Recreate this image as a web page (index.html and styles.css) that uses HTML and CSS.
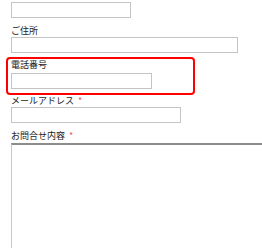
FILE: index.html
```html
<!DOCTYPE html>
<html lang="ja">
<head>
<meta charset="utf-8">
<link rel="stylesheet" href="styles.css">
</head>
<body>
<form class="form">
  <div class="row row-first">
    <input class="field field-name" type="text">
  </div>
  <div class="row">
    <label class="label">ご住所</label>
    <input class="field field-address" type="text">
  </div>
  <div class="highlight">
    <label class="label">電話番号</label>
    <input class="field field-tel" type="text">
  </div>
  <div class="row">
    <label class="label">メールアドレス <span class="req">*</span></label>
    <input class="field field-mail" type="text">
  </div>
  <div class="row">
    <label class="label label-msg">お問合せ内容 <span class="req">*</span></label>
    <textarea class="area"></textarea>
  </div>
</form>
</body>
</html>
```

FILE: styles.css
```css
html, body {
  margin: 0;
  padding: 0;
  background: #fff;
  overflow: hidden;
}
.form {
  width: 262px;
  height: 248px;
  padding: 2px 0 0 6px;
  box-sizing: border-box;
  font-family: "Noto Sans CJK JP", "Noto Sans", sans-serif;
  font-size: 9px;
  color: #222;
  overflow: hidden;
}
.row {
  display: flex;
  flex-direction: column;
  align-items: flex-start;
  padding-left: 5px;
}
.row-first {
  margin-bottom: 7px;
}
.label {
  display: block;
  line-height: 12px;
  height: 12px;
  white-space: nowrap;
}
.req {
  color: #e46060;
  margin-left: 2px;
}
.field {
  display: block;
  box-sizing: border-box;
  height: 16px;
  margin: 0;
  padding: 0;
  border: 1px solid #c4c4c4;
  background: #fff;
  outline: none;
}
.field-name { width: 120px; }
.field-address { width: 227px; }
.field-tel { width: 141px; margin-top: 2px; }
.field-mail { width: 170px; }
.highlight {
  width: 189px;
  box-sizing: border-box;
  margin-top: 4px;
  padding: 0 0 4px 3px;
  border: 2px solid #ff0000;
  border-radius: 4px;
  display: flex;
  flex-direction: column;
  align-items: flex-start;
}
.label-msg {
  margin-top: 7px;
  margin-bottom: 1px;
}
.area {
  display: block;
  box-sizing: border-box;
  width: 300px;
  height: 120px;
  margin: 0;
  padding: 0;
  border: 1px solid #c8c8c8;
  border-top: 2px solid #8c8c8c;
  background: #fff;
  resize: none;
  outline: none;
}
```
